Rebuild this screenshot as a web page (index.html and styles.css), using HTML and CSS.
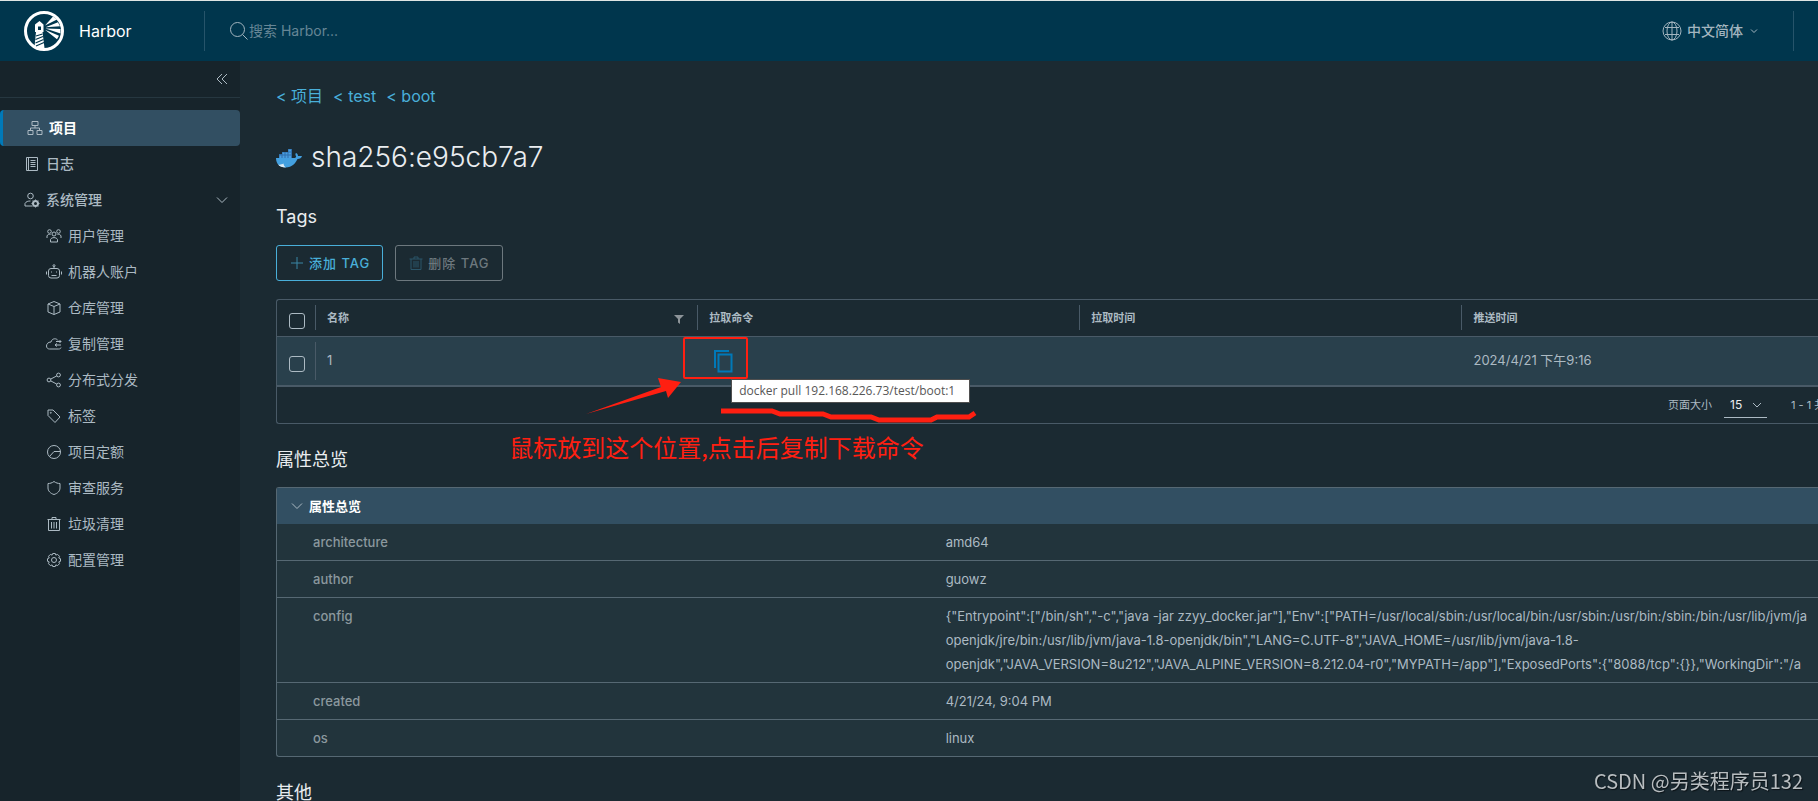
FILE: index.html
```html
<!DOCTYPE html>
<html lang="zh-CN">

<head>
  <meta charset="UTF-8">
  <meta name="viewport" content="width=device-width, initial-scale=1.0">
  <title>Harbor</title>
  <link rel="stylesheet" href="styles.css">
</head>

<body>
  <!-- header -->
  <header class="header">
    <a class="brand" href="#">
      <svg class="logo" viewBox="0 0 40 40">
        <circle cx="20" cy="20" r="18.5" fill="none" stroke="#fff" stroke-width="3"/>
        <path fill="#fff" d="M15.500 10l4 3.500v7.500h-1l2 16-5 2-5-3 1.500-15h-1v-7.500z"/>
        <path fill="#00364d" d="M14 15.500h3v3.500h-3z"/>
        <path fill="none" stroke="#00364d" stroke-width="1.200" d="M12 25l6.500-2M11.500 28.500l7.500-3M11.500 32l8-3.500M12 35l8-3.500"/>
        <path fill="#fff" d="M21 14.500l8-9 4 3zM21.500 16.200l12.500-5 2 4zM21.500 17.500l15 .5v4.500zM21 18.700l14 6-2 3.500z"/>
      </svg>
      <span>Harbor</span>
    </a>
    <label class="search">
      <svg class="search-icon" viewBox="0 0 20 20"><circle cx="8.500" cy="8.500" r="7"/><path d="M13.500 13.500l5 5"/></svg>
      <input type="text" placeholder="搜索 Harbor..." aria-label="搜索 Harbor">
    </label>
    <button class="lang">
      <svg class="globe" viewBox="0 0 20 20"><circle cx="10" cy="10" r="9"/><ellipse cx="10" cy="10" rx="5" ry="9"/><path d="M10 1v18M3 6.500h14M3 13.500h14"/></svg>
      <span>中文简体</span>
      <svg class="caret" viewBox="0 0 8 8"><path d="M1 2.500l3 3 3-3"/></svg>
    </button>
  </header>

  <div class="layout">
    <!-- sidebar -->
    <nav class="sidebar">
      <button class="collapse" aria-label="收起">
        <svg viewBox="0 0 12 12"><path d="M6 1L1 6l5 5M11 1L6 6l5 5"/></svg>
      </button>
      <a class="nav-item active" href="#">
        <svg viewBox="0 0 16 16"><path d="M5 1.500h6v4H5zM1 10.500h5v4H1zM10 10.500h5v4h-5zM8 5.500V8M3.500 10.500V8h9v2.500"/></svg>
        <span>项目</span>
      </a>
      <a class="nav-item" href="#">
        <svg viewBox="0 0 16 16"><path d="M2.500 1.500h11v13h-11zM4.500 1.500v13M6.500 4.500h5M6.500 6.500h5M6.500 8.500h5M6.500 10.500h5"/></svg>
        <span>日志</span>
      </a>
      <a class="nav-item group" href="#">
        <svg viewBox="0 0 16 16"><circle cx="6.500" cy="4" r="2.800"/><path d="M8 14H1v-2.500c1-2 3-2.500 5.500-2.500"/><circle cx="11.500" cy="11.500" r="2.500" stroke-width="2"/><path d="M11.500 7.500v1M11.500 14.500v1M7.500 11.500h1M14.500 11.500h1M8.700 8.700l.8.8M13.500 13.500l.8.800M14.300 8.700l-.8.800M9.500 13.500l-.8.800"/></svg>
        <span>系统管理</span>
        <svg class="group-caret" viewBox="0 0 12 12"><path d="M1 3.500l5 5 5-5"/></svg>
      </a>
      <a class="nav-item sub" href="#">
        <svg viewBox="0 0 16 16"><circle cx="8" cy="6" r="2"/><circle cx="3.500" cy="3.500" r="1.800"/><circle cx="12.500" cy="3.500" r="1.800"/><path d="M4.500 14v-2.500c1-2.500 6-2.500 7 0V14zM1 10V8c.5-1.500 2-2 3.500-1.500M15 10V8c-.5-1.500-2-2-3.500-1.500"/></svg>
        <span>用户管理</span>
      </a>
      <a class="nav-item sub" href="#">
        <svg viewBox="0 0 16 16"><rect x="2.500" y="4.500" width="11" height="9.500" rx="2.500"/><circle cx="8" cy="1.700" r="1"/><path d="M8 2.700v1.800M.5 7.500v3M15.500 7.500v3M5 8h1M10 8h1M5.500 11.500h5"/></svg>
        <span>机器人账户</span>
      </a>
      <a class="nav-item sub" href="#">
        <svg viewBox="0 0 16 16"><path d="M8 1.500l6 2.500v8l-6 2.500L2 12V4zM2 4l6 2.500L14 4M8 6.500v8"/></svg>
        <span>仓库管理</span>
      </a>
      <a class="nav-item sub" href="#">
        <svg viewBox="0 0 16 16"><path d="M12 4.500C10.500 2 6 2 5 6 2 6 .5 8 .5 10s1.500 3 3 3h9c1.500 0 2.500-.5 2.500-1.500M9 9h6M11 7.500L9 9l2 1.500M10 5.500h5M13.500 4l1.500 1.500L13.500 7"/></svg>
        <span>复制管理</span>
      </a>
      <a class="nav-item sub" href="#">
        <svg viewBox="0 0 16 16"><circle cx="12.500" cy="3" r="1.900"/><circle cx="3" cy="8" r="1.900"/><circle cx="12.500" cy="13" r="1.900"/><path d="M4.700 7.100l6.100-3.200M4.700 8.900l6.100 3.200"/></svg>
        <span>分布式分发</span>
      </a>
      <a class="nav-item sub" href="#">
        <svg viewBox="0 0 16 16"><path d="M2 2h5l7 7-5 5.500-7-7z"/><circle cx="4.800" cy="4.800" r=".5"/></svg>
        <span>标签</span>
      </a>
      <a class="nav-item sub" href="#">
        <svg viewBox="0 0 16 16"><circle cx="8" cy="8" r="6.500"/><path d="M14.500 7.500H8L3.500 12.500"/></svg>
        <span>项目定额</span>
      </a>
      <a class="nav-item sub" href="#">
        <svg viewBox="0 0 16 16"><path d="M8 1.500c2 1.500 4 2 6 2V8c0 3-2.500 5.500-6 6.500C4.500 13.500 2 11 2 8V3.500c2 0 4-.5 6-2z"/></svg>
        <span>审查服务</span>
      </a>
      <a class="nav-item sub" href="#">
        <svg viewBox="0 0 16 16"><path d="M1.500 3.500h13M6 3.500v-2h4v2M2.500 3.500v11h11v-11M5.500 6v6.500M8 6v6.500M10.500 6v6.500"/></svg>
        <span>垃圾清理</span>
      </a>
      <a class="nav-item sub" href="#">
        <svg viewBox="0 0 16 16"><circle cx="8" cy="8" r="2.500"/><path d="M6.700 1.500h2.600l.5 1.600 1.800-.7 1.900 1.900-.7 1.700 1.700.7v2.600l-1.700.6.7 1.800-1.900 1.900-1.800-.7-.5 1.600H6.700l-.6-1.600-1.700.7-1.900-1.900.7-1.800-1.700-.6V6.700l1.700-.7-.7-1.700 1.900-1.900 1.700.7z"/></svg>
        <span>配置管理</span>
      </a>
    </nav>

    <!-- content -->
    <main class="content">
      <div class="breadcrumb">
        <a href="#">&lt; 项目</a>
        <a href="#">&lt; test</a>
        <a href="#">&lt; boot</a>
      </div>

      <h1 class="title">
        <svg class="docker" viewBox="0 0 26 20">
          <path fill="#2f6fad" d="M3 5h13v5H3zM6 3h10v3H6zM12 0h4v4h-4z"/>
          <path fill="#4a9fdf" d="M3.500 6.500h2v2.500h-2zM6.500 6.500h2v2.500h-2zM9.500 6.500h2v2.500h-2zM12.500 6.500h2.500v2.500h-2.500zM6.500 3.500h2v2h-2zM9.500 3.500h2v2h-2zM12.500 3.500h2.500v2h-2.500zM12.500.5H15v2h-2.500z"/>
          <path fill="#43a0e0" d="M0 9h17.500c2 0 3-.5 2.500-2-1-1-.5-2.500 0-3 1.500.5 2 2 2 3h4c-.5 2-2 2.800-4.500 3-2 4-5 8.500-12 8.500C4 18.500 0 15 0 9z"/>
          <path fill="#dcebf5" d="M2 15.500c2 .5 4 0 5.500-1 0 1.500 1 3 2.500 4-4 0-6.500-1-8-3z"/>
        </svg>
        <span>sha256:e95cb7a7</span>
      </h1>

      <h2 class="section-title">Tags</h2>
      <div class="actions">
        <button class="btn">
          <svg viewBox="0 0 14 14"><path d="M7 1v12M1 7h12"/></svg>
          <span>添加 TAG</span>
        </button>
        <button class="btn" disabled>
          <svg viewBox="0 0 14 14"><path d="M.5 3h13M5 3V1h4v2M2 3v10.500h10V3M5 5v6.500M7 5v6.500M9 5v6.500"/></svg>
          <span>删除 TAG</span>
        </button>
      </div>

      <div class="datagrid">
        <table class="tags">
          <thead>
            <tr>
              <th class="check"><input type="checkbox" aria-label="全选"></th>
              <th class="col"><div class="head">名称<svg class="filter" viewBox="0 0 10 10"><path d="M0 1h10L6 5v5L4 8.500V5z"/></svg></div></th>
              <th class="col"><div class="head">拉取命令</div></th>
              <th class="col"><div class="head">拉取时间</div></th>
              <th><div class="head">推送时间</div></th>
            </tr>
          </thead>
          <tbody>
            <tr>
              <td class="check"><input type="checkbox" aria-label="选择 1"></td>
              <td><div class="cell first">1</div></td>
              <td class="pull">
                <button class="copy" aria-label="复制">
                  <svg viewBox="0 0 20 24"><path d="M1 18V1h14M4.500 4.500h13v17h-13z"/></svg>
                </button>
                <div class="tooltip">docker pull 192.168.226.73/test/boot:1</div>
                <!-- red marks over the copy button -->
                <svg class="marks" viewBox="0 0 400 90">
                  <rect x="106" y="1" width="63" height="40" rx="1"/>
                  <path class="arrow" d="M8 77L83 50 80 41 103 45 90 61 88 54z"/>
                  <path class="line" d="M143 74h51l8 3h43l8 3h40l8 3h52l6-3h32l6-4"/>
                </svg>
                <div class="note">鼠标放到这个位置,点击后复制下载命令</div>
              </td>
              <td></td>
              <td><div class="cell">2024/4/21 下午9:16</div></td>
            </tr>
          </tbody>
        </table>
        <div class="pager">
          <label for="page-size">页面大小</label>
          <div class="size">
            <select id="page-size"><option>15</option></select>
            <svg viewBox="0 0 10 10"><path d="M1 3l4 4 4-4"/></svg>
          </div>
          <span class="count">1 - 1 共</span>
        </div>
      </div>

      <h2 class="section-title">属性总览</h2>
      <section class="props">
        <button class="props-head">
          <svg viewBox="0 0 12 12"><path d="M1 3.500l5 5 5-5"/></svg>
          <span>属性总览</span>
        </button>
        <table class="props-table">
          <tr><th>architecture</th><td>amd64</td></tr>
          <tr><th>author</th><td>guowz</td></tr>
          <tr><th>config</th><td>{"Entrypoint":["/bin/sh","-c","java -jar zzyy_docker.jar"],"Env":["PATH=/usr/local/sbin:/usr/local/bin:/usr/sbin:/usr/bin:/sbin:/bin:/usr/lib/jvm/ja<br>openjdk/jre/bin:/usr/lib/jvm/java-1.8-openjdk/bin","LANG=C.UTF-8","JAVA_HOME=/usr/lib/jvm/java-1.8-<br>openjdk","JAVA_VERSION=8u212","JAVA_ALPINE_VERSION=8.212.04-r0","MYPATH=/app"],"ExposedPorts":{"8088/tcp":{}},"WorkingDir":"/a</td></tr>
          <tr><th>created</th><td>4/21/24, 9:04 PM</td></tr>
          <tr><th>os</th><td>linux</td></tr>
        </table>
      </section>

      <h2 class="section-title other">其他</h2>
    </main>
  </div>

  <div class="watermark">CSDN @另类程序员132</div>
</body>

</html>
```
FILE: styles.css
```css
* {
  box-sizing: border-box;
}

body {
  margin: 0;
  height: 100vh;
  display: flex;
  flex-direction: column;
  overflow: hidden;
  background-color: #1b2a32;
  color: #acbac3;
  font-family: Inter, "Noto Sans CJK SC", sans-serif;
  font-size: 14px;
  line-height: 24px;
}

a {
  color: inherit;
  text-decoration: none;
}

button,
input,
select {
  font: inherit;
  color: inherit;
  background: none;
  border: none;
  padding: 0;
  margin: 0;
}

svg {
  display: block;
  flex: none;
  fill: none;
  stroke: currentColor;
}

/* header */
.header {
  flex: none;
  display: flex;
  align-items: center;
  height: 61px;
  padding-right: 24px;
  border-top: 1px solid #dfe6e4;
  background-color: #00364d;
}

.brand {
  display: flex;
  align-items: center;
  gap: 15px;
  width: 205px;
  height: 40px;
  padding-left: 24px;
  border-right: 1px solid #26546a;
  color: #fff;
  font-size: 16px;
}

.logo {
  width: 40px;
  height: 40px;
  stroke: none;
}

.search {
  flex: 1;
  display: flex;
  align-items: center;
  padding-left: 24px;
}

.search-icon {
  width: 20px;
  height: 20px;
  color: #a3b5bf;
}

.search input {
  flex: 1;
  outline: none;
}

.search input::placeholder {
  color: #668696;
}

.lang {
  display: flex;
  align-items: center;
  gap: 5px;
  height: 40px;
  padding-right: 35px;
  border-right: 1px solid #26546a;
  color: #a3b5bf;
  font-weight: 500;
}

.globe {
  width: 20px;
  height: 20px;
}

.caret {
  width: 8px;
  height: 8px;
  margin-left: 2px;
}

/* sidebar */
.layout {
  flex: 1;
  display: flex;
  min-height: 0;
}

.sidebar {
  flex: none;
  width: 240px;
  background-color: #17242b;
}

.collapse {
  display: flex;
  align-items: center;
  justify-content: flex-end;
  width: 100%;
  height: 37px;
  margin-bottom: 12px;
  padding-right: 12px;
  border-bottom: 1px solid #263740;
}

.collapse svg {
  width: 12px;
  height: 12px;
}

.nav-item {
  display: flex;
  align-items: center;
  gap: 6px;
  height: 36px;
  padding: 0 12px 0 24px;
}

.nav-item svg {
  width: 16px;
  height: 16px;
}

.nav-item.active {
  border-left: 3px solid #0079b8;
  border-radius: 4px;
  background-color: #324f62;
  color: #fff;
  font-weight: 700;
}

.nav-item.active svg {
  color: #acbac3;
}

.nav-item.group,
.nav-item.active + .nav-item {
  font-weight: 500;
}

.nav-item.sub {
  padding-left: 46px;
}

.nav-item .group-caret {
  width: 12px;
  height: 12px;
  margin-left: auto;
}

/* content */
.content {
  flex: 1;
  min-width: 0;
  overflow: hidden;
  padding: 23px 0 0 36px;
}

.breadcrumb {
  display: flex;
  gap: 10px;
  color: #49afd9;
  font-size: 16px;
}

.title {
  display: flex;
  align-items: center;
  gap: 9px;
  margin: 29px 0 0;
  color: #eaedf0;
  font-size: 28px;
  font-weight: 300;
  line-height: 40px;
}

.docker {
  width: 26px;
  height: 20px;
  margin-top: 3px;
  stroke: none;
}

.section-title {
  margin: 28px 0 0;
  color: #eaedf0;
  font-size: 18px;
  font-weight: 400;
  line-height: 24px;
}

.actions {
  display: flex;
  gap: 12px;
  margin-top: 16px;
}

.btn {
  display: flex;
  align-items: center;
  gap: 5px;
  height: 36px;
  padding: 0 12px 0 13px;
  border: 1px solid #49afd9;
  border-radius: 3px;
  color: #49afd9;
  font-size: 13px;
  font-weight: 500;
  letter-spacing: 1px;
}

.btn svg {
  width: 14px;
  height: 14px;
  color: #3b86a5;
}

.btn:disabled {
  border-color: #6d787e;
  color: #6d787e;
}

.btn:disabled svg {
  color: #2b5569;
}

/* tags table */
.datagrid {
  margin-top: 18px;
  border: 1px solid #495a67;
  border-right: none;
  border-radius: 3px 0 0 3px;
}

.tags {
  width: 100%;
  table-layout: fixed;
  border-collapse: collapse;
  text-align: left;
}

.tags th,
.tags td {
  padding: 0;
}

.tags th {
  height: 36px;
  border-bottom: 1px solid #495a67;
  font-size: 11px;
}

.tags td {
  height: 50px;
  border-bottom: 2px solid #495a67;
  background-color: #29404c;
  font-size: 13px;
}

.tags .check {
  width: 38px;
  padding: 6px 0 0 12px;
}

.tags .col {
  width: 24.8%;
}

.check input {
  display: block;
  appearance: none;
  width: 16px;
  height: 16px;
  border: 1px solid #acbac3;
  border-radius: 3px;
}

.head {
  display: flex;
  align-items: center;
  justify-content: space-between;
  height: 25px;
  padding: 0 13px 0 11px;
  border-left: 1px solid #495a67;
}

.filter {
  width: 10px;
  height: 10px;
  margin-top: 3px;
  fill: #8d9499;
  stroke: none;
}

.cell {
  height: 38px;
  padding: 6px 12px;
}

.cell.first {
  padding-left: 11px;
  border-left: 1px solid #495a67;
}

.tags .pull {
  position: relative;
}

.copy {
  display: block;
  margin: 2px 0 0 17px;
  color: #0079b8;
}

.copy svg {
  width: 20px;
  height: 24px;
  stroke-width: 2;
}

.tooltip {
  position: absolute;
  z-index: 2;
  left: 34px;
  top: 42px;
  height: 24px;
  padding: 0 14px 0 7px;
  border: 1px solid #4f4f4f;
  background-color: #fff;
  color: #575757;
  font-family: "Open Sans", sans-serif;
  font-size: 12px;
  line-height: 22px;
  white-space: nowrap;
}

.marks {
  position: absolute;
  z-index: 1;
  left: -119px;
  top: 0;
  width: 400px;
  height: 90px;
  stroke: #ff1f11;
  stroke-width: 2;
}

.marks .arrow {
  fill: #ff1f11;
  stroke: none;
}

.marks .line {
  stroke-width: 5;
}

.note {
  position: absolute;
  left: -188px;
  top: 92px;
  color: #ff1f11;
  font-family: "Noto Sans CJK SC", sans-serif;
  font-size: 24px;
  line-height: 36px;
  white-space: nowrap;
}

.pager {
  display: flex;
  align-items: center;
  justify-content: flex-end;
  height: 36px;
  font-size: 11px;
}

.size {
  display: flex;
  align-items: center;
  width: 43px;
  margin: 0 24px 0 12px;
  padding-left: 6px;
  border-bottom: 1px solid #acbac3;
  color: #eaedf0;
}

.size select {
  appearance: none;
  width: 22px;
  font-size: 12px;
}

.size svg {
  width: 10px;
  height: 10px;
  color: #acbac3;
}

/* the count runs on past the right edge of the window */
.count {
  width: 27px;
  white-space: nowrap;
}

/* properties */
.datagrid + .section-title {
  margin-top: 24px;
}

.props {
  margin-top: 15px;
  border: 1px solid #566873;
  border-right: none;
  border-radius: 3px 0 0 3px;
  background-color: #22343c;
}

.props-head {
  display: flex;
  align-items: center;
  gap: 6px;
  width: 100%;
  height: 36px;
  padding-left: 14px;
  background-color: #324f62;
  color: #fff;
  font-size: 13px;
  font-weight: 700;
}

.props-head svg {
  width: 12px;
  height: 12px;
  color: #acbac3;
}

.props-table {
  width: 100%;
  table-layout: fixed;
  border-collapse: collapse;
  font-size: 13px;
  text-align: left;
}

.props-table th,
.props-table td {
  padding: 6px 0;
  vertical-align: top;
  white-space: nowrap;
}

.props-table th {
  width: 43%;
  padding-left: 36px;
  color: #8b989e;
  font-weight: 500;
}

.props-table td {
  padding-left: 6px;
}

.props-table tr + tr {
  border-top: 1px solid #566873;
}

.section-title.other {
  margin-top: 24px;
}

.watermark {
  position: fixed;
  right: 15px;
  bottom: 5px;
  color: #b8bdc0;
  font-family: "Noto Sans CJK SC", sans-serif;
  font-size: 20px;
  line-height: 30px;
  text-shadow: 1px 1px 1px #0b1216;
}
```
